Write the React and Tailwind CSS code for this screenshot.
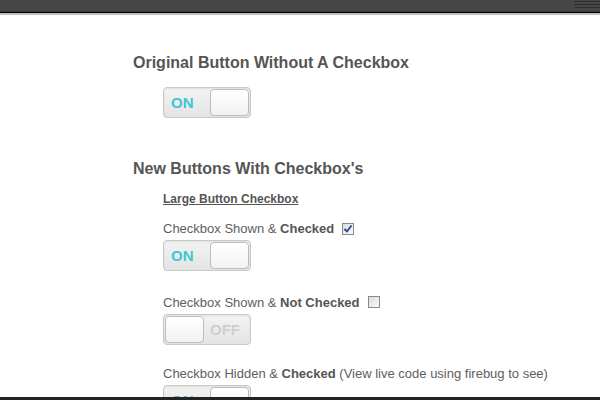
function Toggle({ on }) {
  return (
    <div className="relative w-[88px] h-[31px] rounded-[4px] border border-[#c8c8c8] bg-gradient-to-b from-[#f3f3f3] to-[#e4e4e4] shadow-[inset_0_1px_2px_rgba(0,0,0,0.08)]">
      {on ? (
        <>
          <span className="absolute left-[7px] top-[6px] text-[15px] leading-[18px] font-bold text-[#3ec6d3]">ON</span>
          <div className="absolute right-[1px] top-[1px] w-[39px] h-[27px] rounded-[4px] border border-[#bdbdbd] bg-gradient-to-b from-white to-[#f2f2f2]" />
        </>
      ) : (
        <>
          <div className="absolute left-[1px] top-[1px] w-[39px] h-[27px] rounded-[4px] border border-[#bdbdbd] bg-gradient-to-b from-white to-[#f2f2f2]" />
          <span className="absolute left-[46px] top-[6px] text-[15px] leading-[18px] font-bold text-[#cfcfcf]">OFF</span>
        </>
      )}
    </div>
  )
}

function Check({ checked }) {
  return (
    <span className="inline-flex items-center justify-center w-[12px] h-[12px] border border-[#8a8a8a] bg-gradient-to-br from-[#dcdcdc] to-[#fafafa] ml-[8px] align-[-1px]">
      {checked && (
        <svg width="10" height="10" viewBox="0 0 10 10">
          <path d="M1.5 5 L4 7.5 L8.5 1.5" fill="none" stroke="#2a3fa6" strokeWidth="1.8" />
        </svg>
      )}
    </span>
  )
}

export default function App() {
  return (
    <div className="w-[600px] h-[400px] bg-white overflow-hidden relative font-['Liberation_Sans',Arial,sans-serif] text-[#5e5e5e]">
      {/* top toolbar */}
      <div className="h-[11px] bg-[#474747] relative">
        <div className="absolute right-0 top-[1px] w-[26px] flex flex-col gap-[2px]">
          <div className="h-[1px] bg-[#2f2f2f]" />
          <div className="h-[1px] bg-[#2f2f2f]" />
          <div className="h-[1px] bg-[#2f2f2f]" />
        </div>
      </div>
      <div className="h-[1px] bg-[#3a3a3a]" />
      <div className="h-[1px] bg-black" />
      <div className="h-[2px] bg-[#bdbdbd]" />

      <div className="pl-[133px]">
        <h2 className="mt-[39px] text-[16px] leading-[18px] font-bold text-[#555]">Original Button Without A Checkbox</h2>
        <div className="pl-[30px] mt-[15px]">
          <Toggle on />
        </div>

        <h2 className="mt-[42px] text-[16px] leading-[18px] font-bold text-[#555]">New Buttons With Checkbox's</h2>
        <div className="pl-[30px]">
          <div className="mt-[14px] text-[12px] leading-[14px] font-bold underline text-[#555]">Large Button Checkbox</div>

          <div className="mt-[15px] text-[13px] leading-[16px]">
            Checkbox Shown &amp; <b className="text-[#555]">Checked</b>
            <Check checked />
          </div>
          <div className="mt-[3px]">
            <Toggle on />
          </div>

          <div className="mt-[24px] text-[13px] leading-[16px]">
            Checkbox Shown &amp; <b className="text-[#555]">Not Checked</b>
            <Check />
          </div>
          <div className="mt-[3px]">
            <Toggle />
          </div>

          <div className="mt-[21px] text-[13px] leading-[16px]">
            Checkbox Hidden &amp; <b className="text-[#555]">Checked</b> (View live code using firebug to see)
          </div>
          <div className="mt-[3px]">
            <Toggle on />
          </div>
        </div>
      </div>

      {/* bottom bar */}
      <div className="absolute left-0 right-0 bottom-0 h-[3px] bg-[#222]" />
    </div>
  )
}
